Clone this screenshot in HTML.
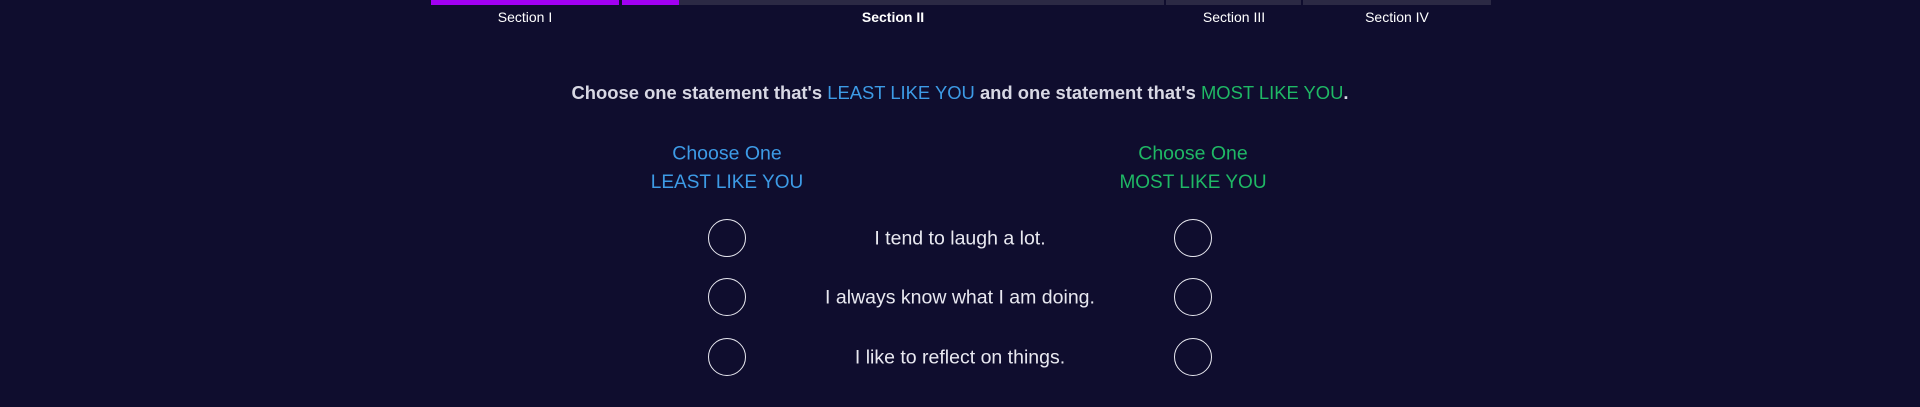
<!DOCTYPE html>
<html><head><meta charset="utf-8"><style>
body{margin:0;width:1920px;height:407px;background:#0f0d2e;font-family:"Liberation Sans",sans-serif;position:relative;overflow:hidden;color:#e8e8f0}
.b{position:absolute;top:0;height:5px;background:#2b2944}
.p{background:#a100f2}
.l{position:absolute;top:9px;font-size:14px;font-weight:bold;color:#fff;transform:translateX(-50%);white-space:nowrap}
.c{position:absolute;transform:translate(-50%,-50%);white-space:nowrap}
.o{position:absolute;width:36px;height:36px;border:1.5px solid #e8e8f0;border-radius:50%;transform:translate(-50%,-50%)}
.bl{color:#3d9be6}.gr{color:#1fb865}
</style></head><body>
<div class="b p" style="left:431px;width:188px"></div>
<div class="b p" style="left:622px;width:57px"></div>
<div class="b" style="left:679px;width:485px"></div>
<div class="b" style="left:1166px;width:135px"></div>
<div class="b" style="left:1303px;width:188px"></div>
<div class="l" style="left:525px;font-weight:normal">Section I</div>
<div class="l" style="left:893px">Section II</div>
<div class="l" style="left:1234px;font-weight:normal">Section III</div>
<div class="l" style="left:1397px;font-weight:normal">Section IV</div>
<div class="c" style="left:960px;top:93px;font-size:18.4px;font-weight:bold;color:#d8d8e4">Choose one statement that's <span class="bl" style="font-weight:normal">LEAST LIKE YOU</span> and one statement that's <span class="gr" style="font-weight:normal">MOST LIKE YOU</span>.</div>
<div class="c bl" style="left:727px;top:154px;font-size:19.5px">Choose One</div>
<div class="c bl" style="left:727px;top:183px;font-size:19px">LEAST LIKE YOU</div>
<div class="c gr" style="left:1193px;top:154px;font-size:19.5px">Choose One</div>
<div class="c gr" style="left:1193px;top:183px;font-size:19px">MOST LIKE YOU</div>
<div class="o" style="left:727px;top:238px"></div><div class="o" style="left:1193px;top:238px"></div>
<div class="o" style="left:727px;top:297px"></div><div class="o" style="left:1193px;top:297px"></div>
<div class="o" style="left:727px;top:357px"></div><div class="o" style="left:1193px;top:357px"></div>
<div class="c" style="left:960px;top:239px;font-size:19.5px">I tend to laugh a lot.</div>
<div class="c" style="left:960px;top:298px;font-size:19.5px">I always know what I am doing.</div>
<div class="c" style="left:960px;top:358px;font-size:19.5px">I like to reflect on things.</div>
</body></html>
